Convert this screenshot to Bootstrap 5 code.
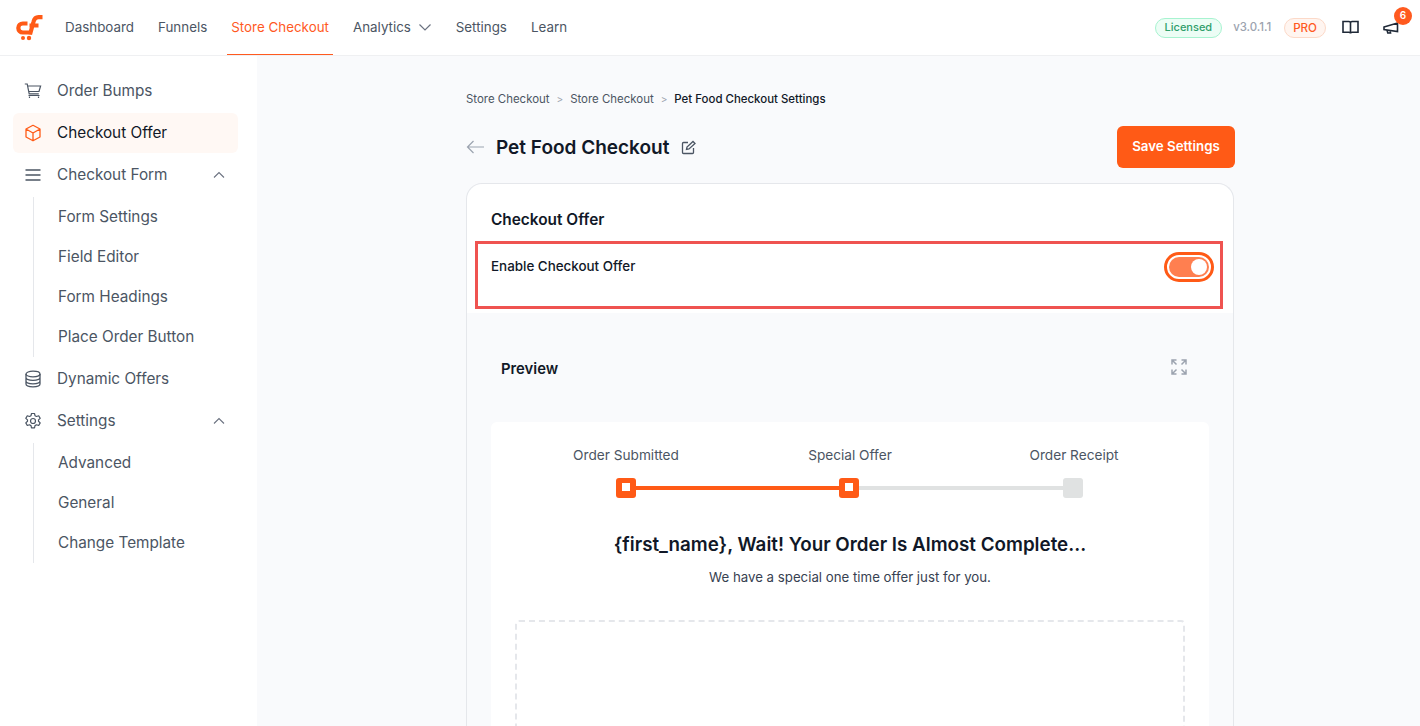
<!DOCTYPE html>
<html lang="en">
<head>
<meta charset="utf-8">
<title>Pet Food Checkout</title>
<link href="https://cdn.jsdelivr.net/npm/bootstrap@5.3.0/dist/css/bootstrap.min.css" rel="stylesheet">
<style>
html,body{height:726px;overflow:hidden}
body{font-family:Inter,"Liberation Sans",sans-serif;background:#f9fafc;color:#1f2937;font-size:14px}
.top{height:56px;background:#fff;border-bottom:1px solid #eff0f2;padding-left:15px;padding-right:21px}
.logo{width:28px;height:28px;margin-right:10px}
.top-link{display:block;height:55px;line-height:54px;padding:0 12px;color:#4b5563;text-decoration:none;font-size:13.380px;white-space:nowrap}
.top-link.active{color:#ff5a1f;border-bottom:1px solid #ff5a1f;padding:0 4.500px;margin:0 7.500px}
.top-link svg{margin-left:3px;vertical-align:-2px}
.lic{height:20px;line-height:17px;font-size:11px;font-weight:500;color:#2f9e6b;background:#ecfdf5;border:1px solid #a7f3d0;border-radius:10px;padding:0 9px}
.ver{font-size:11.400px;color:#9ca3af;font-weight:500;margin:0 13px 0 11px}
.pro{height:20px;line-height:18px;font-size:11.600px;font-weight:500;color:#ff5a1f;background:#fff5f0;border:1px solid #fcd9c8;border-radius:10px;padding:0 8px}
.bell{margin-left:24px;height:16px}
.badge-n{position:absolute;top:-13px;right:-13px;width:18px;height:18px;border-radius:50%;background:#ff5a1f;color:#fff;font-size:10px;font-weight:600;display:flex;align-items:center;justify-content:center}
.side{width:257px;height:670px;background:#fff;padding:15px 19px 0 13px;flex:none}
.s-item{height:40px;display:flex;align-items:center;padding-left:11px;border-radius:6px;color:#4b5563;font-size:15.300px;margin-bottom:2px;text-decoration:none;position:relative}
.s-item svg.ic{width:18px;height:18px;margin-right:15px;flex:none}
.s-item.active{background:#fff8f4;color:#111827}
.chev{position:absolute;right:13px;top:16px}
.sub{margin-left:20px;border-left:1px solid #e5e7eb;margin-bottom:2px}
.sub a{display:block;height:40px;line-height:40px;padding-left:24px;color:#4b5563;font-size:15.300px;text-decoration:none}
.main{flex:1;padding-left:209px;height:670px;overflow:hidden}
.wrap{width:768px}
.crumbs{height:17px;margin-top:35px;font-size:11.450px;line-height:17px;color:#4b5563}
.crumbs .sep{color:#9ca3af;margin:0 7px;font-size:10px}
.crumbs b{font-weight:500;color:#111827}
.head{height:42px;margin-top:18px;margin-bottom:15px}
.head h1{font-size:19px;font-weight:600;color:#111827;margin:2px 12px 0 11px}
.save{background:#ff5a16;color:#fff;font-size:13.300px;font-weight:600;border:0;border-radius:6px;height:42px;width:118px;padding:0;margin-right:-1px}
.box{border:1px solid #e5e7eb;border-bottom:0;border-radius:16px 16px 0 0;background:#f9fafc;height:560px;overflow:hidden}
.white{background:#fff;height:129px;padding:0 10px 0 8px;border-radius:16px 16px 0 0}
.white h2{font-size:15.400px;font-weight:600;color:#111827;margin:0;padding:27px 0 0 16px;line-height:18px;height:57px}
.flag{border:3px solid #ef5350;height:68px;padding:13px 6px 0 13px;font-size:13.400px;line-height:18px;color:#111827;font-weight:500}
.tog{width:50px;height:30px;border:3px solid #ff5a16;border-radius:15px;padding:2px;margin-top:-5px;background:#fff}
.tog i{display:flex;justify-content:flex-end;align-items:center;height:100%;background:#ff7f50;border-radius:11px;padding-right:2px}
.tog u{display:block;width:16px;height:16px;border-radius:50%;background:#fff}
.prev{height:109px;padding:4px 46px 0 34px}
.prev span{font-size:14.800px;font-weight:600;color:#111827}
.prev svg{margin-bottom:6px}
.panel{background:#fff;margin:0 24px;height:330px;padding-top:24px;border-radius:6px 6px 0 0}
.stlabels{display:grid;grid-template-columns:repeat(3,224px);height:18px;text-align:center;font-size:13.650px;line-height:18px;color:#4b5563;margin-left:23px}
.track{width:467px;margin:14px 0 0 125px;display:flex;align-items:center;height:20px}
.node{width:20px;height:20px;border-radius:3px;background:#ff5a16;display:flex;align-items:flex-start;justify-content:center;padding-top:5px;flex:none}
.node b{display:block;width:8px;height:8px;background:#fff}
.node.off{background:#e0e2e2}
.bar{height:4px;flex:0 0 203px;background:#ff5a16}
.bar.off{flex:1;background:#e0e2e2}
.panel h3{font-size:18.800px;font-weight:600;color:#111827;text-align:center;margin:33px 0 0;line-height:28px}
.panel p{font-size:13.250px;color:#374151;text-align:center;margin:9px 0 0;line-height:18px}
.dash{margin:34px 24px 0;height:200px;border:2px dashed #e5e7eb;border-radius:4px}
</style>
</head>
<body>
<header class="top d-flex align-items-center">
  <svg class="logo" viewBox="0 0 28 28" fill="none" stroke="#ff5a16" stroke-width="4.200"><path d="M12.500 9.500H7.800a4.500 4.500 0 0 0 0 9h8"/><path d="M15 20.500 18.500 7.800C19.200 5 21 3.200 23.500 3.200H27.500M14.500 11.500h9"/><circle cx="8" cy="24" r="2" fill="#ff5a16" stroke="none"/><circle cx="14" cy="24" r="2.200" fill="#ff5a16" stroke="none"/></svg>
  <nav class="d-flex">
    <a class="top-link" href="#">Dashboard</a>
    <a class="top-link" href="#">Funnels</a>
    <a class="top-link active" href="#">Store Checkout</a>
    <a class="top-link" href="#">Analytics <svg width="14" height="14" viewBox="0 0 14 14" fill="none" stroke="#6b7280" stroke-width="1.200"><path d="m1.500 4.500 5.500 5.500 5.500-5.500"/></svg></a>
    <a class="top-link" href="#">Settings</a>
    <a class="top-link" href="#">Learn</a>
  </nav>
  <div class="ms-auto d-flex align-items-center">
    <span class="lic">Licensed</span>
    <span class="ver">v3.0.1.1</span>
    <span class="pro">PRO</span>
    <svg class="ms-3" width="17" height="17" viewBox="0 0 17 17" fill="none" stroke="#1f2937" stroke-width="1.600"><path d="M1 2.500h6c.9 0 1.500.6 1.500 1.500v10.500c0-.8-.6-1.300-1.500-1.300H1zM16 2.500h-6c-.9 0-1.500.6-1.500 1.500v10.500c0-.8.6-1.300 1.500-1.300h6z"/></svg>
    <span class="bell position-relative d-block">
      <svg class="d-block" width="16" height="16" viewBox="0 0 16 16" fill="none" stroke="#1f2937" stroke-width="1.600"><path d="M1 7 14.500 3v8.500L1 9.500zM4 10l.800 3H7.500L7 10.500"/></svg>
      <span class="badge-n">6</span>
    </span>
  </div>
</header>
<div class="d-flex">
  <aside class="side">
    <a class="s-item" href="#"><svg class="ic" viewBox="0 0 18 18" fill="none" stroke="#4b5563" stroke-width="1.200"><path d="M.800 2h2.400l2 9.800h9.600M3.600 4h13l-1.600 5.500H4.700"/><path d="M5.500 14.500v1.500M14.500 14.500v1.500M4.500 13.500h11"/></svg>Order Bumps</a>
    <a class="s-item active" href="#"><svg class="ic" viewBox="0 0 18 18" fill="none" stroke="#ff5a16" stroke-width="1.300" stroke-linejoin="round"><path d="M9 1.300 16 5v8l-7 3.800L2 13V5zM2 5l7 4 7-4M9 9v7.800"/></svg>Checkout Offer</a>
    <a class="s-item" href="#"><svg class="ic" viewBox="0 0 18 18" fill="none" stroke="#4b5563" stroke-width="1.300"><path d="M1.500 4h15M1.500 9h15M1.500 14h15"/></svg>Checkout Form<svg class="chev" width="12" height="8" viewBox="0 0 12 8" fill="none" stroke="#6b7280" stroke-width="1.100"><path d="m1 6.500 5-5 5 5"/></svg></a>
    <div class="sub"><a href="#">Form Settings</a><a href="#">Field Editor</a><a href="#">Form Headings</a><a href="#">Place Order Button</a></div>
    <a class="s-item" href="#"><svg class="ic" viewBox="0 0 18 18" fill="none" stroke="#4b5563" stroke-width="1.300"><ellipse cx="9" cy="4" rx="7" ry="2.800"/><path d="M2 4v10c0 1.500 3 2.800 7 2.800s7-1.300 7-2.800V4M2 7.500c0 1.500 3 2.800 7 2.800s7-1.300 7-2.800M2 11c0 1.500 3 2.800 7 2.800s7-1.300 7-2.800"/></svg>Dynamic Offers</a>
    <a class="s-item" href="#"><svg class="ic" viewBox="0 0 18 18" fill="none" stroke="#4b5563" stroke-width="1.200" stroke-linejoin="round"><circle cx="9" cy="9" r="2.500"/><path d="M7.500 1.500h3l.5 2.200 1.500.8 2.200-.7 1.500 2.600-1.700 1.500v1.400l1.700 1.600-1.500 2.600-2.200-.7-1.500.8-.5 2.200h-3L7 13.600l-1.500-.8-2.200.7-1.500-2.600 1.700-1.600V7.900L1.800 6.400l1.500-2.600 2.200.7L7 3.700z"/></svg>Settings<svg class="chev" width="12" height="8" viewBox="0 0 12 8" fill="none" stroke="#6b7280" stroke-width="1.100"><path d="m1 6.500 5-5 5 5"/></svg></a>
    <div class="sub"><a href="#">Advanced</a><a href="#">General</a><a href="#">Change Template</a></div>
  </aside>
  <main class="main">
    <div class="wrap">
      <div class="crumbs">Store Checkout<span class="sep">&gt;</span>Store Checkout<span class="sep">&gt;</span><b>Pet Food Checkout Settings</b></div>
      <div class="head d-flex align-items-center">
        <svg width="19" height="14" viewBox="0 0 19 14" fill="none" stroke="#9ca3af" stroke-width="1.200"><path d="M18 7H1.500M7.500 1 1.500 7l6 6"/></svg>
        <h1>Pet Food Checkout</h1>
        <svg width="15" height="15" viewBox="0 0 15 15" fill="none" stroke="#4b5563" stroke-width="1.300"><path d="M7 2.500H2.500c-.6 0-1 .4-1 1v9c0 .6.4 1 1 1h9c.6 0 1-.4 1-1V8"/><path d="m5.500 9.500.500-2.500 6-5.500 2 2-6 5.500z"/></svg>
        <button class="save btn ms-auto" type="button">Save Settings</button>
      </div>
      <section class="box">
        <div class="white">
          <h2>Checkout Offer</h2>
          <div class="flag d-flex justify-content-between align-items-start">
            <span>Enable Checkout Offer</span>
            <span class="tog"><i><u></u></i></span>
          </div>
        </div>
        <div class="prev d-flex align-items-center justify-content-between">
          <span>Preview</span>
          <svg width="16" height="16" viewBox="0 0 16 16" fill="none" stroke="#9ca3af" stroke-width="1.500"><path d="M1 5.500V1h4.500M1 1l4.500 4.500M15 5.500V1h-4.500M15 1l-4.500 4.500M1 10.500V15h4.500M1 15l4.500-4.500M15 10.500V15h-4.500M15 15l-4.500-4.500"/></svg>
        </div>
        <div class="panel">
          <div class="stlabels"><span>Order Submitted</span><span>Special Offer</span><span>Order Receipt</span></div>
          <div class="track"><span class="node"><b></b></span><span class="bar"></span><span class="node"><b></b></span><span class="bar off"></span><span class="node off"></span></div>
          <h3>{first_name}, Wait! Your Order Is Almost Complete...</h3>
          <p>We have a special one time offer just for you.</p>
          <div class="dash"></div>
        </div>
      </section>
    </div>
  </main>
</div>
</body>
</html>
